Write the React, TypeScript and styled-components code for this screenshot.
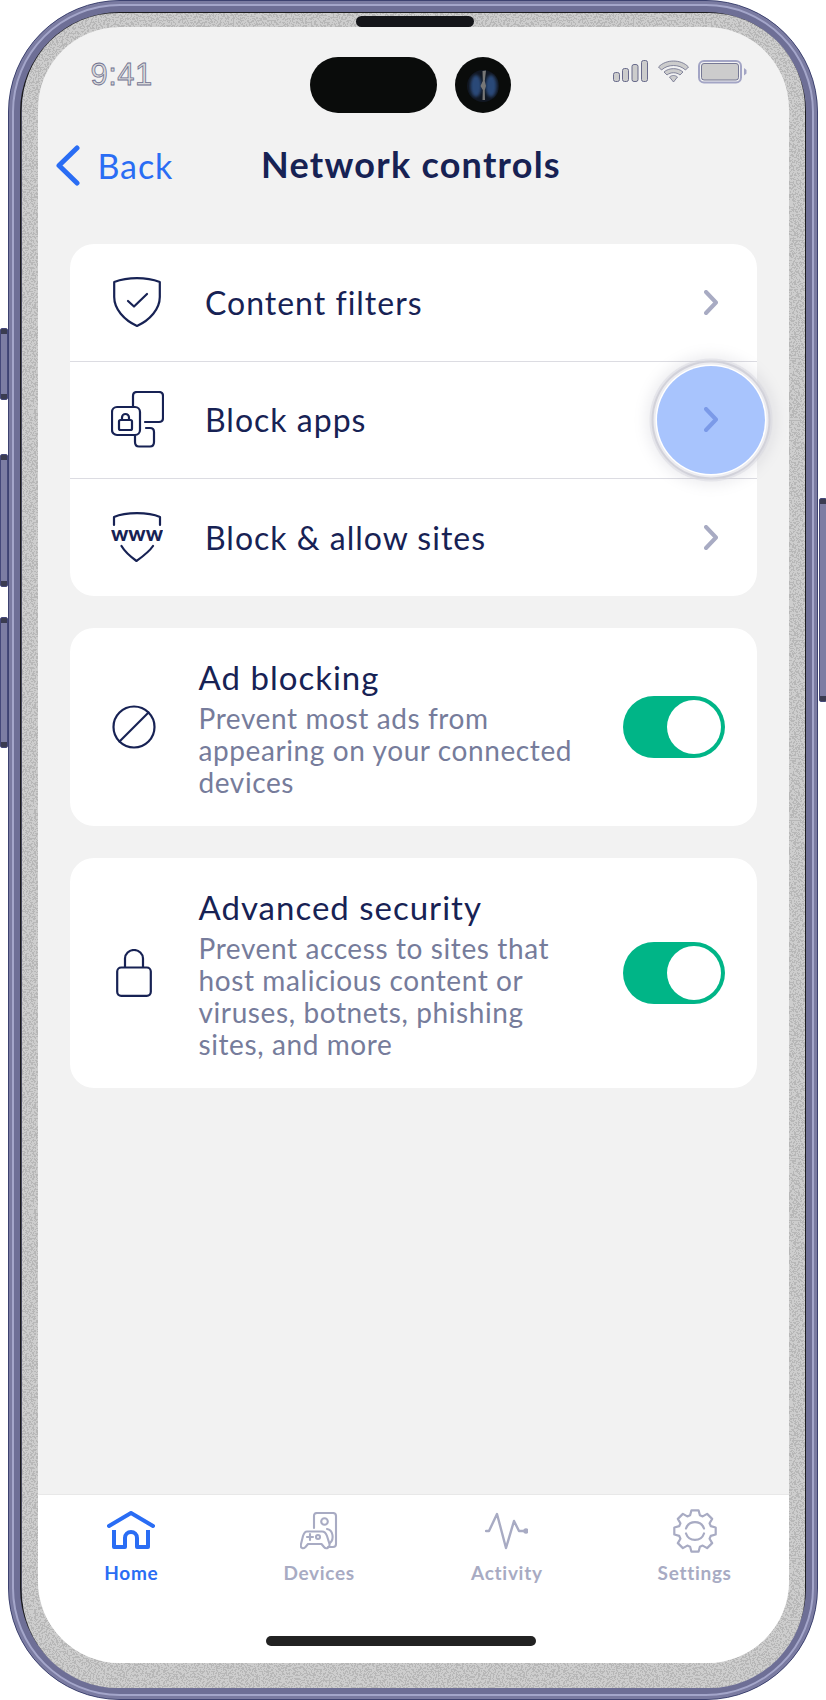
import * as React from "react";
import styled, { createGlobalStyle } from "styled-components";

const NOISE =
  "data:image/svg+xml," +
  encodeURIComponent(
    `<svg xmlns="http://www.w3.org/2000/svg" width="400" height="400"><filter id="n" x="0" y="0" width="100%" height="100%"><feTurbulence type="fractalNoise" baseFrequency="0.55" numOctaves="3" seed="7"/><feColorMatrix values="0 0 0 0 0.47 0 0 0 0 0.47 0 0 0 0 0.47 4 0 0 0 -1.6"/><feComponentTransfer><feFuncA type="discrete" tableValues="0 1"/></feComponentTransfer></filter><rect width="400" height="400" fill="#cdcdcd"/><rect width="400" height="400" filter="url(#n)"/></svg>`
  );

const NAVY = "#172254";
const BLUE = "#2a6df4";
const MUTED = "#a8abc3";
const FONT = `"Lato", "Noto Sans", sans-serif`;

const Global = createGlobalStyle`
  html, body {
    margin: 0;
    background: #fff;
  }
  body {
    font-family: ${FONT};
    color: ${NAVY};
  }
`;

const Page = styled.div`
  width: 826px;
  height: 1700px;
  padding-left: 8px;
  box-sizing: border-box;
`;

const Frame = styled.div`
  position: relative;
  width: 810px;
  height: 1700px;
  box-sizing: border-box;
  display: flex;
  padding: 11.5px 12.5px;
  background: #75769c;
  border: 1.5px solid #3d4270;
  border-radius: 112px;
  box-shadow: inset 0 0 0 3px #7a7ba1, inset 0 0 0 5px #a4a6ca, inset 0 0 0 11px #6e6f96,
    inset 0 0 0 12.5px #1c1c1e;
`;

const SideButton = styled.div<{ $top: number; $height: number; $right?: boolean }>`
  position: absolute;
  top: ${(p) => p.$top}px;
  height: ${(p) => p.$height}px;
  ${(p) => (p.$right ? "right: -9.5px;" : "left: -9.5px;")}
  width: 8px;
  box-sizing: border-box;
  background: linear-gradient(
    to bottom,
    #3a3c50 0 5px,
    #7c7da3 5px calc(100% - 5px),
    #3a3c50 calc(100% - 5px)
  );
  border: 1px solid #45487a;
  border-radius: 2px;
`;

const Bezel = styled.div`
  position: relative;
  flex: 1;
  display: flex;
  padding: 14px 16px 25px;
  background: #cdcdcd url("${NOISE}");
  border-radius: 96px;
`;

const Speaker = styled.div`
  position: absolute;
  top: 3px;
  left: 334px;
  width: 118px;
  height: 11px;
  border-radius: 6px;
  background: #15161a;
`;

const Screen = styled.div`
  flex: 1;
  display: flex;
  flex-direction: column;
  background: #f2f2f2;
  border-radius: 82px;
  overflow: hidden;
`;

const StatusBar = styled.div`
  height: 88px;
  box-sizing: border-box;
  padding-top: 30px;
  display: grid;
  grid-template-columns: 272px 145px 56px 102px auto;
  align-items: start;
`;

const Time = styled.div`
  padding: 0 0 0 53px;
  font-family: "Liberation Sans", sans-serif;
  font-size: 31px;
  line-height: 36px;
  letter-spacing: 0.5px;
  color: #d9d9d9;
  -webkit-text-stroke: 0.8px #6f7190;
`;

const Island = styled.div`
  width: 127px;
  height: 56px;
  border-radius: 28px;
  background: #0a0c0b;
`;

const StatusIcons = styled.div`
  grid-column: 5;
  display: flex;
  align-items: flex-start;
  margin-top: 3px;
  gap: 9px;
`;

const Header = styled.div`
  height: 98px;
  display: grid;
  grid-template-columns: 1fr auto 1fr;
  align-items: center;
  padding: 0 22px 0 18px;
`;

const BackLink = styled.div`
  display: flex;
  align-items: center;
  gap: 18px;
  margin-top: 3px;
  font-size: 34px;
  letter-spacing: 0.9px;
  color: ${BLUE};
`;

const Title = styled.div`
  font-size: 36px;
  font-weight: 700;
  letter-spacing: 1.25px;
  color: ${NAVY};
`;

const Content = styled.div`
  flex: 1;
  display: flex;
  flex-direction: column;
  gap: 32px;
  padding: 31px 32px 0;
`;

const Card = styled.div`
  background: #fff;
  border-radius: 24px;
`;

const Row = styled.div`
  height: 117px;
  display: flex;
  align-items: center;
  & + & {
    height: 117.5px;
    box-sizing: border-box;
    border-top: 1.5px solid #dcdce2;
  }
`;

const RowIcon = styled.div`
  width: 135.5px;
  display: flex;
  justify-content: center;
`;

const RowLabel = styled.div`
  flex: 1;
  font-size: 32px;
  letter-spacing: 1px;
`;

const ChevronSlot = styled.div`
  position: relative;
  width: 14px;
  height: 25px;
  margin-right: 39px;
`;

const Ripple = styled.div`
  position: absolute;
  left: 50%;
  top: 50%;
  width: 108px;
  height: 108px;
  margin: -54px 0 0 -54px;
  border-radius: 50%;
  background: #a8c4fd;
  box-shadow: 0 0 0 1.5px #fff, 0 0 0 3.5px #ececf0, 0 0 0 5.5px #d2d2da,
    0 0 0 7.5px rgba(215, 215, 223, 0.5), 0 0 13px 11px rgba(130, 130, 150, 0.14);
`;

const ChevronIcon = styled.svg`
  position: relative;
  display: block;
`;

const ToggleCard = styled(Card)`
  display: flex;
  align-items: center;
  padding: 29px 32px 28px 0;
`;

const CardIcon = styled.div`
  flex: none;
  width: 129px;
  display: flex;
  justify-content: center;
`;

const CardText = styled.div`
  flex: 1;
`;

const CardTitle = styled.div`
  font-size: 33px;
  line-height: 40px;
  letter-spacing: 1px;
  margin-bottom: 5px;
`;

const CardDescription = styled.div`
  font-size: 28px;
  line-height: 32px;
  letter-spacing: 0.6px;
  color: #767c9b;
  white-space: pre-line;
`;

const Toggle = styled.div`
  flex: none;
  width: 102px;
  height: 62px;
  box-sizing: border-box;
  padding: 4px;
  display: flex;
  justify-content: flex-end;
  border-radius: 31px;
  background: #00b587;
`;

const Thumb = styled.div`
  width: 54px;
  height: 54px;
  border-radius: 50%;
  background: #fff;
`;

const TabBar = styled.div`
  height: 169px;
  box-sizing: border-box;
  display: flex;
  flex-direction: column;
  align-items: center;
  background: #fff;
  border-top: 1.5px solid #e8e8e8;
`;

const Tabs = styled.div`
  width: 100%;
  display: grid;
  grid-template-columns: repeat(4, 1fr);
`;

const Tab = styled.div<{ $active?: boolean }>`
  height: 100px;
  display: flex;
  flex-direction: column;
  align-items: center;
  font-size: 19px;
  font-weight: 700;
  letter-spacing: 0.7px;
  color: ${(p) => (p.$active ? BLUE : MUTED)};
`;

const TabIcon = styled.div`
  height: 60px;
  margin-top: 6px;
  display: flex;
  align-items: center;
`;

const HomeIndicator = styled.div`
  width: 270px;
  height: 10px;
  margin-top: auto;
  margin-bottom: 17px;
  margin-right: 24px;
  border-radius: 5px;
  background: #222;
`;

const Chevron = ({ color }: { color: string }) => (
  <ChevronIcon width="14" height="25" viewBox="0 0 14 25" fill="none" stroke={color} strokeWidth="4" strokeLinecap="round" strokeLinejoin="round">
    <path d="M2 2 L12 12.5 L2 23" />
  </ChevronIcon>
);

const ShieldCheck = () => (
  <svg width="48" height="50" viewBox="0 0 48 50" fill="none" stroke={NAVY} strokeWidth="2.2" strokeLinejoin="round" strokeLinecap="round">
    <path d="M1.2 5 C8 2.5 16 1.2 24 1.2 C32 1.2 40 2.5 46.8 5 V20 C46.8 32 37 43 24 49 C11 43 1.2 32 1.2 20 Z" />
    <path d="M15 24 L21 29.5 L34 17" />
  </svg>
);

const BlockApps = () => (
  <svg width="53" height="57" viewBox="0 0 53 57" fill="none" stroke={NAVY} strokeWidth="2.2" strokeLinecap="round" strokeLinejoin="round">
    <path d="M22 15 V5 Q22 1 26 1 H48 Q52 1 52 5 V27 Q52 31 48 31 H34" />
    <rect x="1" y="16" width="28" height="28" rx="5" />
    <path d="M35 37 H39 Q43 37 43 41 V51 Q43 55.5 39 55.5 H28 Q24 55.5 24 51 V45" />
    <rect x="8" y="29" width="13" height="10" rx="1.5" />
    <path d="M11 29 V26.5 A3.5 3.5 0 0 1 18 26.5 V29" />
  </svg>
);

const WwwShield = () => (
  <svg width="52" height="50" viewBox="0 0 52 50" fill="none" stroke={NAVY} strokeWidth="2.2" strokeLinecap="round" strokeLinejoin="round">
    <path d="M3 13 V5 C10 2 18 1.2 26 1.2 C34 1.2 42 2 49 5 V13" />
    <path d="M10.5 34 C14 40 20 45 25.5 49 C31 45 38 40 42 34" />
    <text x="0" y="29" textLength="52" lengthAdjust="spacingAndGlyphs" stroke="none" fill={NAVY} fontFamily="Lato, sans-serif" fontWeight="900" fontSize="21">www</text>
  </svg>
);

const BlockedCircle = () => (
  <svg width="44" height="44" viewBox="0 0 44 44" fill="none" stroke={NAVY} strokeWidth="2.2" strokeLinecap="round">
    <circle cx="22" cy="22" r="20.5" />
    <path d="M7.5 36.5 L36.5 7.5" />
  </svg>
);

const LockOutline = () => (
  <svg width="36" height="48" viewBox="0 0 36 48" fill="none" stroke={NAVY} strokeWidth="2.2" strokeLinejoin="round">
    <rect x="1.2" y="18.5" width="33.6" height="28.3" rx="4" />
    <path d="M9 18.5 V9.5 A9 8.5 0 0 1 27 9.5 V18.5" />
  </svg>
);

const HomeIcon = () => (
  <svg width="48" height="39" viewBox="0 0 48 39" fill="none" stroke={BLUE} strokeWidth="4" strokeLinecap="round" strokeLinejoin="round">
    <path d="M2 15 L24 2 L46 15" />
    <path d="M7 19 V36 H18 V27 A6 6 0 0 1 30 27 V36 H41 V19" strokeLinecap="butt" />
  </svg>
);

const DevicesIcon = () => (
  <svg width="38" height="38" viewBox="0 0 38 38" fill="none" stroke={MUTED} strokeWidth="2.1" strokeLinecap="round" strokeLinejoin="round">
    <path d="M14 16 V4 Q14 1 17 1 H33 Q36 1 36 4 V32 Q36 35 33 35 H28" />
    <circle cx="24.5" cy="9.5" r="3.3" />
    <path d="M27 17 C33 18 34.5 27 30 31" />
    <path d="M7 19.5 H22 C25 19.5 26 21 27 24 L29.5 32 C30 36 26 37.5 24 35 L21.5 32 H8 L5.5 35 C3 37.5 0 36 1 32 L3 24 C4 21 5 19.5 7 19.5 Z" />
    <path d="M7 25 H13 M10 22 V28" />
    <circle cx="18" cy="25" r="2" />
  </svg>
);

const ActivityIcon = () => (
  <svg width="43" height="38" viewBox="0 0 43 38" fill="none" stroke={MUTED} strokeWidth="2.4" strokeLinecap="round" strokeLinejoin="round">
    <path d="M1 19 H4 L12 2 L21 36 L29 9 L34 19 H41" />
    <circle cx="41" cy="19" r="1.5" fill={MUTED} />
  </svg>
);

// eight rounded teeth, computed so they stay even
const gearPath = (() => {
  const pts: string[] = [];
  for (let i = 0; i < 8; i++) {
    const a = (i * Math.PI) / 4;
    [
      [16.5, -0.3],
      [21, -0.17],
      [21, 0.17],
      [16.5, 0.3],
    ].forEach(([r, d]) => {
      pts.push(`${(22 + r * Math.sin(a + d)).toFixed(2)} ${(22 - r * Math.cos(a + d)).toFixed(2)}`);
    });
  }
  return `M${pts.join(" L")} Z`;
})();

const GearIcon = () => (
  <svg width="44" height="44" viewBox="0 0 44 44" fill="none" stroke={MUTED} strokeWidth="2.2" strokeLinecap="round" strokeLinejoin="round">
    <path d={gearPath} />
    <path d="M13 19.5 A9.5 9.5 0 0 1 31 19.5 M31 24.5 A9.5 9.5 0 0 1 13 24.5" />
  </svg>
);

const CameraDot = () => (
  <svg width="56" height="56" viewBox="0 0 56 56">
    <defs>
      <filter id="lensBlur">
        <feGaussianBlur stdDeviation="1.6" />
      </filter>
    </defs>
    <circle cx="28" cy="28" r="28" fill="#0a0c0b" />
    <circle cx="28" cy="29" r="16" fill="#111722" />
    <ellipse cx="21" cy="29" rx="5.5" ry="11" fill="#2c4a78" filter="url(#lensBlur)" />
    <ellipse cx="36" cy="29" rx="5.5" ry="11" fill="#2c4a78" filter="url(#lensBlur)" />
    <path d="M27.5 14 L31 13.5 L29.8 24 L31 29 L29.8 33 L30 43 H27.5 L27.8 33 L25.5 29 L27.8 24 Z" fill="#777" />
  </svg>
);

const SignalBars = () => (
  <svg width="36" height="22" viewBox="0 0 36 22" fill="#ccc" stroke="#5b5e82" strokeWidth="0.9">
    <rect x="0.5" y="12.5" width="6" height="9" rx="2" />
    <rect x="9.5" y="8.5" width="6" height="13" rx="2" />
    <rect x="19" y="4.5" width="6" height="17" rx="2" />
    <rect x="28.5" y="0.5" width="6" height="21" rx="2" />
  </svg>
);

const WifiGlyph = () => (
  <svg width="31" height="23" viewBox="0 0 31 23" fill="#ccc" stroke="#6b6d8a" strokeWidth="0.8" strokeLinejoin="round">
    <path d="M0.5 7 C8 -1 23 -1 30.5 7 L27.5 10 C21 4 10 4 3.5 10 Z" />
    <path d="M6 12 C11 7.5 20 7.5 25 12 L22 15 C18.5 12 12.5 12 9 15 Z" />
    <path d="M11.5 17 C14 15 17 15 19.5 17 L15.5 22 Z" />
  </svg>
);

const BatteryGlyph = () => (
  <svg width="50" height="24" viewBox="0 0 50 24">
    <rect x="1" y="1" width="42" height="21.5" rx="5" fill="#f2f2f2" stroke="#a3a5c5" strokeWidth="2" />
    <rect x="3.5" y="3.5" width="37" height="16.5" rx="2.5" fill="#ccc" stroke="#5b5e82" strokeWidth="0.8" />
    <path d="M46 8 L48.5 10 V13.5 L46 15.5 Z" fill="#a3a5c5" />
  </svg>
);

const BackChevron = () => (
  <svg width="24" height="41" viewBox="0 0 24 41" fill="none" stroke={BLUE} strokeWidth="5" strokeLinecap="round" strokeLinejoin="round">
    <path d="M21 3 L3 20.5 L21 38" />
  </svg>
);

const links = [
  { label: "Content filters", icon: <ShieldCheck /> },
  { label: "Block apps", icon: <BlockApps />, pressed: true },
  { label: "Block & allow sites", icon: <WwwShield /> },
];

const toggles = [
  {
    title: "Ad blocking",
    text: "Prevent most ads from\nappearing on your connected\ndevices",
    icon: <BlockedCircle />,
  },
  {
    title: "Advanced security",
    text: "Prevent access to sites that\nhost malicious content or\nviruses, botnets, phishing\nsites, and more",
    icon: <LockOutline />,
  },
];

const tabs = [
  { label: "Home", icon: <HomeIcon />, active: true },
  { label: "Devices", icon: <DevicesIcon /> },
  { label: "Activity", icon: <ActivityIcon /> },
  { label: "Settings", icon: <GearIcon /> },
];

export default function App() {
  return (
    <Page>
      <Global />
      <Frame>
        <SideButton $top={327} $height={72} />
        <SideButton $top={453} $height={133} />
        <SideButton $top={616} $height={131} />
        <SideButton $right $top={497} $height={204} />
        <Bezel>
          <Speaker />
          <Screen>
            <StatusBar>
              <Time>9:41</Time>
              <Island />
              <CameraDot />
              <div />
              <StatusIcons>
                <SignalBars />
                <WifiGlyph />
                <BatteryGlyph />
              </StatusIcons>
            </StatusBar>
            <Header>
              <BackLink>
                <BackChevron />
                Back
              </BackLink>
              <Title>Network controls</Title>
            </Header>
            <Content>
              <Card>
                {links.map((l) => (
                  <Row key={l.label}>
                    <RowIcon>{l.icon}</RowIcon>
                    <RowLabel>{l.label}</RowLabel>
                    <ChevronSlot>
                      {l.pressed && <Ripple />}
                      <Chevron color={l.pressed ? "#7b9ae8" : MUTED} />
                    </ChevronSlot>
                  </Row>
                ))}
              </Card>
              {toggles.map((t) => (
                <ToggleCard key={t.title}>
                  <CardIcon>{t.icon}</CardIcon>
                  <CardText>
                    <CardTitle>{t.title}</CardTitle>
                    <CardDescription>{t.text}</CardDescription>
                  </CardText>
                  <Toggle>
                    <Thumb />
                  </Toggle>
                </ToggleCard>
              ))}
            </Content>
            <TabBar>
              <Tabs>
                {tabs.map((t) => (
                  <Tab key={t.label} $active={t.active}>
                    <TabIcon>{t.icon}</TabIcon>
                    {t.label}
                  </Tab>
                ))}
              </Tabs>
              <HomeIndicator />
            </TabBar>
          </Screen>
        </Bezel>
      </Frame>
    </Page>
  );
}
